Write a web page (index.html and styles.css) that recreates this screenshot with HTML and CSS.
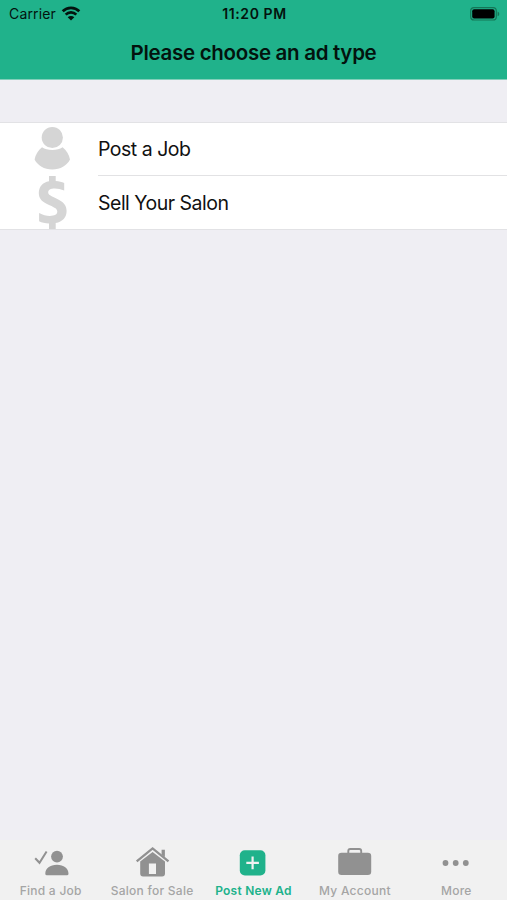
FILE: index.html
```html
<!DOCTYPE html>
<html lang="en">
<head>
  <meta charset="UTF-8">
  <title>Please choose an ad type</title>
  <link rel="stylesheet" href="styles.css">
</head>
<body>
  <header class="header">
    <div class="status-bar">
      <div class="carrier">
        <span class="carrier-name">Carrier</span>
        <svg class="wifi" width="20" height="15" viewBox="0 0 20 15">
          <path d="M1.7 5.3a11.8 11.8 0 0 1 16.6 0M4.7 8.6a7.5 7.5 0 0 1 10.6 0" fill="none" stroke="#03130e" stroke-width="2.7"/>
          <path d="M10 14.5L6.700 11.300a4.700 4.700 0 0 1 6.600 0z" fill="#03130e"/>
        </svg>
      </div>
      <span class="time">11:20 PM</span>
      <svg class="battery" width="30" height="14" viewBox="0 0 30 14">
        <rect x="0.7" y="0.7" width="25.6" height="12.3" rx="3.3" fill="none" stroke="#147657" stroke-width="1.2"/>
        <rect x="2.2" y="2.3" width="22.4" height="9.2" rx="1.9" fill="#000"/>
        <path d="M27.6 4.6q1.7 .7 1.7 2.3t-1.7 2.3z" fill="#147657"/>
      </svg>
    </div>
    <h1>Please choose an ad type</h1>
  </header>

  <main class="content">
    <ul class="ad-types">
      <li>
        <svg class="row-icon" width="40" height="53" viewBox="0 0 40 53">
          <circle cx="20.3" cy="14.500" r="10.600"/>
          <path d="M10 24.300C12.800 26.300 16 27 20.300 27s7.500-.7 10.300-2.700c3.800 3 6.600 7.300 7.400 12.300C35 42.600 28.300 46.600 20.300 46.600S5.600 42.600 2.600 36.600c.8-5 3.600-9.300 7.400-12.300z"/>
        </svg>
        <span>Post a Job</span>
      </li>
      <li>
        <svg class="row-icon" width="40" height="53" viewBox="0 0 40 53">
          <path d="M17 0h6.700v5c3.300.3 6.100 1 8.500 2.100v7.500c-3.200-1.500-6.300-2.200-9.300-2.200-4.500 0-6.700 1.400-6.700 3.900 0 2.500 2.500 3.700 8.100 6.200 6.900 3.100 10.300 6.600 10.300 12.500 0 6.400-4 10.800-10.900 12V53H17v-5.600c-3.900-.1-7.300-.9-9.900-2.200v-8.100c3.700 2 7.200 2.900 10.700 2.900 4.900 0 7.500-1.500 7.500-4.400 0-2.600-2.200-4-7.700-6.400C10.200 26 6.800 22.700 6.800 16.900 6.800 10.600 10.700 6.400 17 5.200z"/>
        </svg>
        <span>Sell Your Salon</span>
      </li>
    </ul>
  </main>

  <nav class="tab-bar">
    <a class="tab">
      <svg width="40" height="34" viewBox="0 0 40 34">
        <path d="M4.200 14.200l4.300 4.600 7.100-11.300" fill="none" stroke="currentColor" stroke-width="2"/>
        <circle cx="26" cy="12.600" r="5.900"/>
        <path d="M14.300 29.700c0-5.200 4.700-8.900 11.600-8.900s11.600 3.700 11.600 8.900q0 1.500-1.600 1.500h-20q-1.600 0-1.600-1.500z"/>
      </svg>
      <span>Find a Job</span>
    </a>
    <a class="tab">
      <svg width="40" height="34" viewBox="0 0 40 34">
        <path d="M4.700 17.400L20.600 4.400l15.900 13" fill="none" stroke="currentColor" stroke-width="2.300"/>
        <path d="M29.600 5.800h3.300v7.500l-3.300-2.700z"/>
        <path fill-rule="evenodd" d="M8.200 17.500L20.600 8 33 17.500v12q0 2.900-2.900 2.900h-19q-2.900 0-2.900-2.900zM16.900 19.600v10.300H24V19.600z"/>
      </svg>
      <span>Salon for Sale</span>
    </a>
    <a class="tab active">
      <svg width="40" height="34" viewBox="0 0 40 34">
        <rect x="6.800" y="6.200" width="25.600" height="25.300" rx="5"/>
        <path d="M19.600 12.600v12.600M13.300 18.900h12.600" stroke="#f1f1f1" stroke-width="2.200"/>
      </svg>
      <span>Post New Ad</span>
    </a>
    <a class="tab">
      <svg width="40" height="34" viewBox="0 0 40 34">
        <path d="M13.300 10V7q0-2 2-2h8.900q2 0 2 2v3" fill="none" stroke="currentColor" stroke-width="1.900"/>
        <rect x="3.200" y="8.700" width="33" height="22.300" rx="3.300"/>
      </svg>
      <span>My Account</span>
    </a>
    <a class="tab">
      <svg width="40" height="34" viewBox="0 0 40 34">
        <circle cx="9.500" cy="19" r="2.900"/>
        <circle cx="19.700" cy="19" r="2.900"/>
        <circle cx="29.800" cy="19" r="2.900"/>
      </svg>
      <span>More</span>
    </a>
  </nav>
</body>
</html>
```

FILE: styles.css
```css
* {
  box-sizing: border-box;
}
body {
  display: flex;
  flex-direction: column;
  height: 900px;
  margin: 0;
  background-color: #efeef3;
  font-family: Inter, "Liberation Sans", sans-serif;
  color: #111;
}
.header {
  height: 80px;
  background-color: #20b28b;
  border-bottom: 1px solid #82cfba;
}
.status-bar {
  display: grid;
  grid-template-columns: 1fr auto 1fr;
  align-items: center;
  height: 27px;
  padding: 0 7px 0 9px;
  color: #03130e;
  font-size: 14px;
}
.carrier {
  display: flex;
  align-items: center;
  gap: 5px;
}
.carrier-name {
  letter-spacing: 0.15px;
}
.wifi {
  margin-top: -1px;
}
.time {
  font-weight: 600;
  letter-spacing: 0.6px;
}
.battery {
  justify-self: end;
}
h1 {
  margin: 12px 0 0;
  font-size: 20.5px;
  line-height: 28px;
  font-weight: 600;
  letter-spacing: -0.3px;
  text-align: center;
  color: #03130e;
}
.content {
  flex: 1;
  padding-top: 42px;
}
.ad-types {
  margin: 0;
  padding: 0;
  list-style: none;
  background-color: #fff;
  border-top: 1px solid #e2e2e5;
  border-bottom: 1px solid #e2e2e5;
}
.ad-types li {
  display: flex;
  gap: 26px;
  height: 53px;
  padding-left: 32px;
  font-size: 19.5px;
  line-height: 53px;
  letter-spacing: -0.5px;
}
.ad-types li span {
  flex: 1;
  height: 53px;
}
.ad-types li:first-child span {
  border-bottom: 1px solid #e2e2e4;
}
.ad-types li:last-child span {
  padding-top: 1px;
}
.row-icon {
  fill: #d5d5d5;
}
.tab-bar {
  display: grid;
  grid-template-columns: repeat(5, 1fr);
  height: 60px;
  padding-top: 4px;
  background-color: #f1f1f1;
}
.tab {
  display: flex;
  flex-direction: column;
  align-items: center;
  color: #919191;
  font-size: 12px;
  line-height: 15px;
  font-weight: 500;
}
.tab svg {
  fill: currentColor;
}
.tab span {
  margin-top: 5px;
  color: #a5a5a5;
  letter-spacing: 0.25px;
  white-space: nowrap;
}
.tab.active,
.tab.active span {
  color: #20b28b;
}
.tab.active span {
  font-weight: 600;
}
```
